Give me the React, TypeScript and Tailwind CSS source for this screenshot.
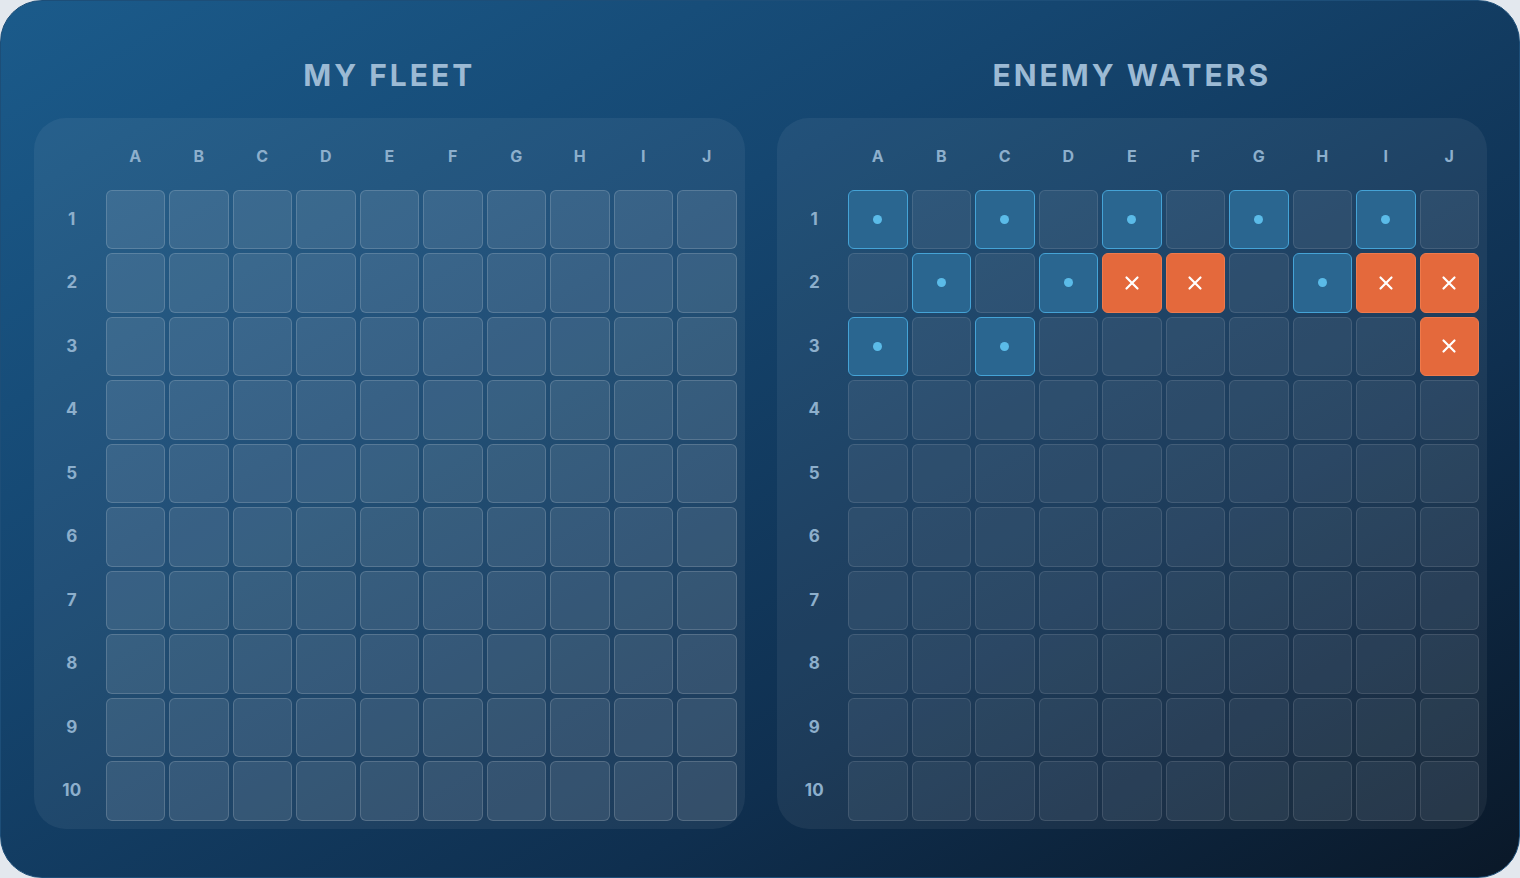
import React from "react";

const COLS = ["A", "B", "C", "D", "E", "F", "G", "H", "I", "J"];
const ROWS = [1, 2, 3, 4, 5, 6, 7, 8, 9, 10];

type Shot = "miss" | "hit";

// Shots fired into the opponent's grid, keyed by "row-col".
const enemyShots: Record<string, Shot> = {
  "1-0": "miss",
  "1-2": "miss",
  "1-4": "miss",
  "1-6": "miss",
  "1-8": "miss",
  "2-1": "miss",
  "2-3": "miss",
  "2-4": "hit",
  "2-5": "hit",
  "2-7": "miss",
  "2-8": "hit",
  "2-9": "hit",
  "3-0": "miss",
  "3-2": "miss",
  "3-9": "hit",
};

function HitMark() {
  return (
    <svg width="18" height="18" viewBox="0 0 18 18" fill="none">
      <path d="M3.5 3.5L14.5 14.5M14.5 3.5L3.5 14.5" stroke="white" strokeWidth="2.2" strokeLinecap="round" />
    </svg>
  );
}

function Cell({ shot, own }: { shot?: Shot; own: boolean }) {
  if (shot === "hit") {
    return (
      <div className="aspect-square rounded-[6px] bg-[#e4693c] border-[1.5px] border-[#ef7a4c] flex items-center justify-center">
        <HitMark />
      </div>
    );
  }
  if (shot === "miss") {
    return (
      <div className="aspect-square rounded-[6px] bg-[#2a6690] border-[1.5px] border-[#45a3d6] flex items-center justify-center">
        <div className="w-[9px] h-[9px] rounded-full bg-[#5bbbe8]" />
      </div>
    );
  }
  return (
    <div
      className={
        own
          ? "aspect-square rounded-[6px] bg-white/[0.1] border-[1.5px] border-white/[0.16]"
          : "aspect-square rounded-[6px] bg-[#94a3b8]/[0.12] border-[1.5px] border-white/[0.11]"
      }
    />
  );
}

function Board({ title, own }: { title: string; own: boolean }) {
  return (
    <div className="flex flex-col items-center">
      <h2 className="h-[40px] leading-[40px] text-[30px] font-bold tracking-[0.1em] text-[#9cbad4]">
        {title}
      </h2>
      <div className="mt-[23px] w-full rounded-[32px] bg-white/[0.06] p-2">
        <div className="grid grid-cols-11 gap-1">
          <div />
          {COLS.map((c) => (
            <div key={c} className="aspect-square flex items-center justify-center text-[16px] font-bold text-[#8dafcc]">
              {c}
            </div>
          ))}
          {ROWS.map((r) => (
            <React.Fragment key={r}>
              <div className="aspect-square flex items-center justify-center text-[17px] font-bold text-[#8dafcc]">
                {r}
              </div>
              {COLS.map((c, ci) => (
                <Cell key={c} own={own} shot={own ? undefined : enemyShots[`${r}-${ci}`]} />
              ))}
            </React.Fragment>
          ))}
        </div>
      </div>
    </div>
  );
}

export default function App() {
  return (
    <div className="w-[1520px] h-[878px] bg-[#e3e8ee]" style={{ fontFamily: "Inter, 'Noto Sans', sans-serif" }}>
      <div className="h-[878px] rounded-[42px] bg-[linear-gradient(to_bottom_right,#1b5b8b_0%,#154670_35%,#0f2f4f_70%,#0a1828_100%)] border border-[#1d4e78] pt-[54px] pl-[33px] pr-[32px]">
        <div className="grid grid-cols-2 gap-[32px]">
          <Board title="MY FLEET" own />
          <Board title="ENEMY WATERS" own={false} />
        </div>
      </div>
    </div>
  );
}
